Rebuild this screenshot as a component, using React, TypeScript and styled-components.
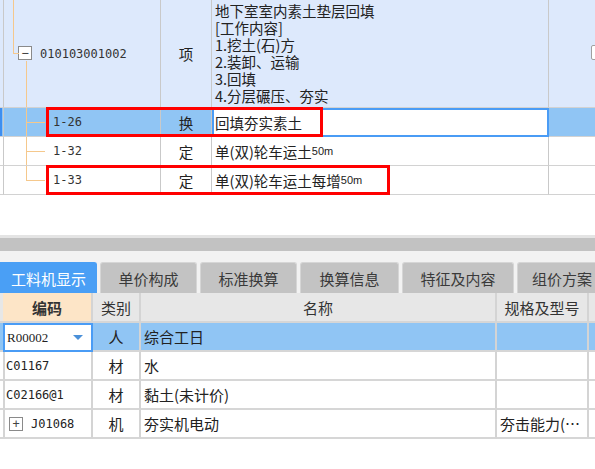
import styled, {createGlobalStyle, css} from "styled-components";

const GlobalStyle = createGlobalStyle`
    html, body {
        margin: 0;
        padding: 0;
        background: #ffffff;
        overflow: hidden;
    }
`;

const CJK = `"Noto Sans CJK SC", "Noto Sans", sans-serif`;
const CODE = `"DejaVu Sans Mono", "Liberation Mono", monospace`;

const Page = styled.div`
    width: 595px;
    height: 469px;
    overflow: hidden;
    display: flex;
    flex-direction: column;
    font-family: ${CJK};
    color: #222;
    background: #fff;
`;

/* ---------- upper grid ---------- */

const TopGrid = styled.div`
    display: flex;
    flex-direction: column;
`;

const TreeRow = styled.div<{$h: number; $bg: string}>`
    position: relative;
    display: grid;
    grid-template-columns: 4px 157px 51px 337px 60px;
    height: ${p => p.$h}px;
    background: ${p => p.$bg};
`;

const Cell = styled.div`
    box-sizing: border-box;
    border-right: 1px solid #c9c9c9;
    border-bottom: 1px solid #d2d2d2;
    display: flex;
    align-items: center;
    font-size: 14.5px;
    white-space: nowrap;
    overflow: hidden;
`;

const Indicator = styled(Cell)<{$on?: boolean}>`
    ${p => p.$on && css`
        background: linear-gradient(to right, #3d8ef0 0 2px, transparent 2px);
    `}
`;

const TypeCell = styled(Cell)`
    justify-content: center;
`;

const NameCell = styled(Cell)<{$editing?: boolean; $multi?: boolean}>`
    padding-left: 3px;
    ${p => p.$multi && css`
        align-items: flex-start;
        padding-top: 2px;
    `}
    ${p => p.$editing && css`
        background: #fff;
        border: 2px solid #4a9cf5;
        padding-left: 1px;
    `}
`;

const Description = styled.div`
    line-height: 17px;
    white-space: pre;
`;

const ParentTree = styled(Cell)`
    position: relative;
    padding-left: 14px;
    font-family: ${CODE};
    font-size: 12px;
    color: #333;
    &::before {
        content: "";
        position: absolute;
        left: 9px;
        top: 0;
        height: 53px;
        width: 5px;
        border-left: 1px solid #f5c88c;
        border-bottom: 1px solid #f5c88c;
    }
    &::after {
        content: "";
        position: absolute;
        left: 22px;
        top: 61px;
        bottom: 0;
        border-left: 1px solid #f5c88c;
    }
`;

const ChildTree = styled(Cell)<{$last?: boolean}>`
    position: relative;
    padding-left: 49px;
    font-family: ${CODE};
    font-size: 12px;
    color: #333;
    &::before {
        content: "";
        position: absolute;
        left: 22px;
        top: 0;
        height: ${p => (p.$last ? "50%" : "100%")};
        border-left: 1px solid #f5c88c;
    }
    &::after {
        content: "";
        position: absolute;
        left: 22px;
        top: 50%;
        width: 19px;
        border-top: 1px solid #f5c88c;
    }
`;

const ExpandBox = styled.span`
    box-sizing: border-box;
    width: 14px;
    height: 14px;
    margin-right: 8px;
    margin-top: -2px;
    border: 1px solid #8a8a8a;
    background: #fff;
    display: inline-flex;
    align-items: center;
    justify-content: center;
    flex: none;
    font-family: ${CODE};
    font-size: 12px;
    line-height: 1;
    color: #444;
`;

const CheckBox = styled.span`
    box-sizing: border-box;
    width: 14px;
    height: 15px;
    margin-left: 42px;
    margin-top: -2px;
    border: 1px solid #a0a0a0;
    border-radius: 2px;
    background: #fff;
    flex: none;
`;

const Small = styled.span`
    font-family: "Liberation Sans", sans-serif;
    font-size: 11px;
`;

const Mark = styled.div<{$left: number; $width: number}>`
    position: absolute;
    left: ${p => p.$left}px;
    width: ${p => p.$width}px;
    top: -1px;
    height: 30px;
    box-sizing: border-box;
    border: 3px solid #ff0000;
    pointer-events: none;
`;

/* ---------- splitter + tabs ---------- */

const Blank = styled.div`
    height: 40px;
    background: #fff;
`;

const Splitter = styled.div`
    height: 16px;
    box-sizing: border-box;
    background: #c2c2c2;
    border-top: 3px solid #e4e4e4;
`;

const TabStrip = styled.div`
    display: flex;
    gap: 3px;
    background: #f2f2f2;
    padding-top: 11px;
    height: 31px;
    align-items: stretch;
`;

const Tab = styled.div<{$active?: boolean; $w: number}>`
    box-sizing: border-box;
    flex: none;
    width: ${p => p.$w}px;
    display: flex;
    align-items: center;
    justify-content: center;
    font-size: 15px;
    border-radius: ${p => (p.$active ? "0 3px 0 0" : "3px 3px 0 0")};
    background: ${p => (p.$active ? "#4a9ff5" : "#c3c3c3")};
    color: ${p => (p.$active ? "#fff" : "#3a3a3a")};
    border: 1px solid ${p => (p.$active ? "#4a9ff5" : "#d6d6d6")};
    border-bottom: none;
`;

/* ---------- lower grid ---------- */

const LowerRow = styled.div<{$h: number; $bg?: string}>`
    display: grid;
    grid-template-columns: 3px 90px 48px 356px 92px 20px;
    height: ${p => p.$h}px;
    background: ${p => p.$bg || "#fff"};
`;

const LCell = styled.div<{$center?: boolean; $code?: boolean}>`
    box-sizing: border-box;
    border-right: 2px solid #d4d4d4;
    border-bottom: 2px solid #d6d6d6;
    display: flex;
    align-items: center;
    justify-content: ${p => (p.$center ? "center" : "flex-start")};
    padding-left: ${p => (p.$center ? 0 : 3)}px;
    font-size: ${p => (p.$code ? 12 : 15)}px;
    font-family: ${p => (p.$code ? CODE : CJK)};
    white-space: nowrap;
    overflow: hidden;
`;

const HeadCell = styled(LCell)<{$key?: boolean}>`
    background: ${p => (p.$key ? "#fde5c7" : "#e7e7e7")};
    font-weight: ${p => (p.$key ? 700 : 400)};
    color: #333;
`;

const Editor = styled(LCell)`
    background: #fff;
    border: 2px solid #4a9cf5;
    padding-left: 2px;
    justify-content: space-between;
    padding-right: 8px;
    font-family: "Liberation Serif", serif;
    font-size: 13px;
`;

const Caret = styled.span`
    width: 0;
    height: 0;
    border-left: 5px solid transparent;
    border-right: 5px solid transparent;
    border-top: 5px solid #4a90d9;
`;

const PlusBox = styled(ExpandBox)`
    margin-left: 3px;
    margin-right: 8px;
    margin-top: 0;
`;

type Item = {code: string; kind: string; name: string; spec?: string; expandable?: boolean};

const items: Item[] = [
    {code: "C01167", kind: "材", name: "水"},
    {code: "C02166@1", kind: "材", name: "黏土(未计价)"},
    {code: "J01068", kind: "机", name: "夯实机电动", spec: "夯击能力(…", expandable: true},
];

const tabs = [
    {label: "工料机显示", w: 97},
    {label: "单价构成", w: 97},
    {label: "标准换算", w: 97},
    {label: "换算信息", w: 99},
    {label: "特征及内容", w: 112},
    {label: "组价方案", w: 90},
];

const description = "地下室室内素土垫层回填\n[工作内容]\n1.挖土(石)方\n2.装卸、运输\n3.回填\n4.分层碾压、夯实";

export default function App(){
    return(
        <Page>
            <GlobalStyle/>
            <TopGrid>
                <TreeRow $h={108} $bg="#dde9fc">
                    <Indicator/>
                    <ParentTree><ExpandBox>−</ExpandBox>010103001002</ParentTree>
                    <TypeCell>项</TypeCell>
                    <NameCell $multi><Description>{description}</Description></NameCell>
                    <Cell><CheckBox/></Cell>
                </TreeRow>
                <TreeRow $h={29} $bg="#90c5f4">
                    <Indicator $on/>
                    <ChildTree>1-26</ChildTree>
                    <TypeCell>换</TypeCell>
                    <NameCell $editing>回填夯实素土</NameCell>
                    <Cell/>
                    <Mark $left={46} $width={277}/>
                </TreeRow>
                <TreeRow $h={29} $bg="#fff">
                    <Indicator/>
                    <ChildTree>1-32</ChildTree>
                    <TypeCell>定</TypeCell>
                    <NameCell>单(双)轮车运土<Small>50m</Small></NameCell>
                    <Cell/>
                </TreeRow>
                <TreeRow $h={29} $bg="#fff">
                    <Indicator/>
                    <ChildTree $last>1-33</ChildTree>
                    <TypeCell>定</TypeCell>
                    <NameCell>单(双)轮车运土每增<Small>50m</Small></NameCell>
                    <Cell/>
                    <Mark $left={46} $width={344}/>
                </TreeRow>
            </TopGrid>
            <Blank/>
            <Splitter/>
            <TabStrip>
                {tabs.map((t, i) => (
                    <Tab key={t.label} $w={t.w} $active={i === 0}>{t.label}</Tab>
                ))}
            </TabStrip>
            <LowerRow $h={30}>
                <HeadCell/>
                <HeadCell $center $key>编码</HeadCell>
                <HeadCell $center>类别</HeadCell>
                <HeadCell $center>名称</HeadCell>
                <HeadCell $center>规格及型号</HeadCell>
                <HeadCell/>
            </LowerRow>
            <LowerRow $h={29} $bg="#90c5f4">
                <LCell/>
                <Editor>R00002<Caret/></Editor>
                <LCell $center>人</LCell>
                <LCell>综合工日</LCell>
                <LCell/>
                <LCell/>
            </LowerRow>
            {items.map(it => (
                <LowerRow key={it.code} $h={29}>
                    <LCell/>
                    <LCell $code>
                        {it.expandable && <PlusBox>+</PlusBox>}
                        {it.code}
                    </LCell>
                    <LCell $center>{it.kind}</LCell>
                    <LCell>{it.name}</LCell>
                    <LCell>{it.spec}</LCell>
                    <LCell/>
                </LowerRow>
            ))}
        </Page>
    );
}
